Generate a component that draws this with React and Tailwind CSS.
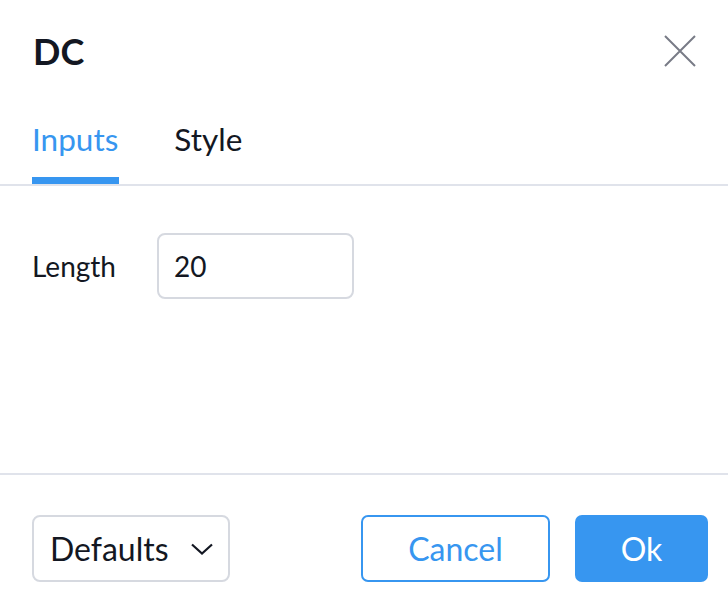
import React from "react";

const font = { fontFamily: "Lato, 'Noto Sans', sans-serif" };

export default function App() {
  return (
    <div style={font} className="w-[728px] h-[606px] bg-white text-[#131722] flex flex-col overflow-hidden">
      {/* Header */}
      <div className="flex items-center justify-between pl-[33px] pr-[32px] pt-[33px]">
        <h1 className="text-[36px] leading-[36px] font-bold">DC</h1>
        <button type="button" className="w-[32px] h-[32px] flex items-center justify-center text-[#787b86]">
          <svg width="32" height="32" viewBox="0 0 32 32" fill="none" stroke="currentColor" strokeWidth="2">
            <path d="M1 1L31 31M31 1L1 31" />
          </svg>
        </button>
      </div>

      {/* Tabs */}
      <div className="mt-[55px] flex gap-[55px] pl-[32px] border-b-2 border-[#e0e3eb]">
        <div className="flex flex-col">
          <span className="text-[31.5px] leading-[31px] text-[#3796f0] pb-[22px] pr-[1px]">Inputs</span>
          <div className="h-[7px] bg-[#3796f0]" />
        </div>
        <div className="flex flex-col">
          <span className="text-[31.5px] leading-[31px] pb-[29px]">Style</span>
        </div>
      </div>

      {/* Inputs */}
      <div className="flex-1 pt-[47px] pl-[32px]">
        <div className="flex items-center">
          <span className="w-[125px] text-[28px] leading-[28px]">Length</span>
          <div className="w-[197px] h-[66px] border-2 border-[#d6d9e0] rounded-[8px] flex items-center px-[15px] text-[28px] leading-[28px]">
            20
          </div>
        </div>
      </div>

      {/* Footer */}
      <div className="border-t-2 border-[#e0e3eb] pt-[40px] pb-[24px] pl-[32px] pr-[20px] flex items-center">
        <button type="button" className="w-[198px] h-[67px] border-2 border-[#d6d9e0] rounded-[8px] flex items-center justify-between pl-[16px] pr-[15px] text-[32px] leading-[32px]">
          <span>Defaults</span>
          <svg width="22" height="12" viewBox="0 0 22 12" fill="none" stroke="#131722" strokeWidth="2.2">
            <path d="M1 1.5L11 10.5L21 1.5" />
          </svg>
        </button>
        <div className="ml-auto flex gap-[25px]">
          <button type="button" className="w-[189px] h-[67px] border-2 border-[#3796f0] rounded-[7px] text-[#3796f0] text-[32px] leading-[32px] flex items-center justify-center">
            Cancel
          </button>
          <button type="button" className="w-[133px] h-[67px] bg-[#3796f0] rounded-[7px] text-white text-[32px] leading-[32px] flex items-center justify-center">
            Ok
          </button>
        </div>
      </div>
    </div>
  );
}
